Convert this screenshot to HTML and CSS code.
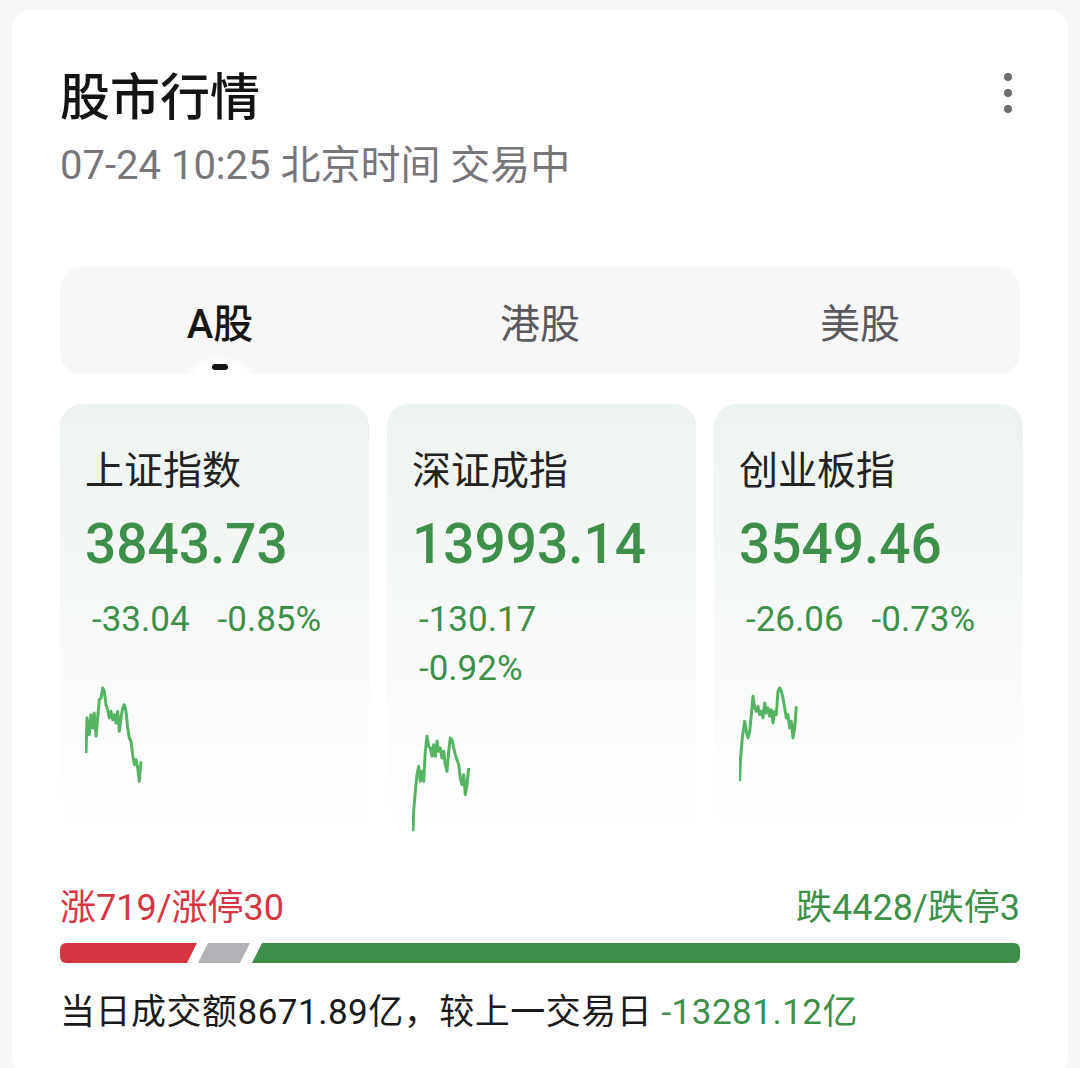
FILE: index.html
```html
<!DOCTYPE html>
<html lang="zh-CN">

<head>
    <meta charset="UTF-8">
    <meta name="viewport" content="width=device-width, initial-scale=1.0">
    <title>股市行情</title>
    <link rel="stylesheet" href="styles.css">
</head>

<body>
    <div class="widget">
        <div class="header">
            <h1>股市行情</h1>
            <button class="more" aria-label="更多">
                <svg width="24" height="40" viewBox="0 0 24 40">
                    <circle cx="12" cy="4" r="4" />
                    <circle cx="12" cy="20" r="4" />
                    <circle cx="12" cy="36" r="4" />
                </svg>
            </button>
        </div>
        <p class="subtitle">07-24 10:25 北京时间 交易中</p>

        <div class="tabs">
            <div class="tab active">A股</div>
            <div class="tab">港股</div>
            <div class="tab">美股</div>
        </div>

        <div class="indexes">
            <div class="index-card">
                <div class="index-name">上证指数</div>
                <div class="index-value">3843.73</div>
                <div class="index-change">
                    <span>-33.04</span>
                    <span>-0.85%</span>
                </div>
                <svg class="spark" width="260" height="100" viewBox="0 0 260 100">
                    <polyline points="1,69 2,34 4.3,50.7 6,30.7 7.7,44 9.3,29 11,52 12.7,34 14.3,15.7 16,14 17.7,4 19.3,7.3 21,20.7 22.7,25.7 24.3,34 26,27.3 27.7,35.7 29.3,30.7 31,39 32.7,27.3 34.3,47.3 36,34 37.7,24 39.3,20.7 41,27.3 42.7,44 44.3,54 46,57.3 47.7,70.7 49.3,80.7 51,75.7 52.7,84 54.3,97.3 56,77.3" />
                </svg>
            </div>
            <div class="index-card">
                <div class="index-name">深证成指</div>
                <div class="index-value">13993.14</div>
                <div class="index-change">
                    <span>-130.17</span>
                    <span>-0.92%</span>
                </div>
                <svg class="spark" width="260" height="100" viewBox="0 0 260 100">
                    <polyline points="1,98.3 1.7,78.3 3.3,58.3 5,41.7 6.7,33.3 8.3,48.3 10,38.3 11.7,48.3 13.3,18.3 15,3.3 16.7,13.3 18.3,15 20,23.3 21.7,11.7 23.3,23.3 25,8.3 26.7,18.3 28.3,15 30,25 31.7,18.3 33.3,31.7 35,38.3 36.7,18.3 38.3,5 40,6.7 41.7,15 43.3,21.7 45,26.7 46.7,31.7 48.3,45 50,51.7 51.7,41.7 53.3,61.7 55,51.7 56.7,35" />
                </svg>
            </div>
            <div class="index-card">
                <div class="index-name">创业板指</div>
                <div class="index-value">3549.46</div>
                <div class="index-change">
                    <span>-26.06</span>
                    <span>-0.73%</span>
                </div>
                <svg class="spark" width="260" height="100" viewBox="0 0 260 100">
                    <polyline points="0.7,97.3 1.3,77.3 3.3,54 5.7,37.3 7.3,47.3 9,54 10.7,47.3 12.3,30.7 14,12.3 15.7,24 17.3,27.3 19,22.3 20.7,30.7 22.3,27.3 24,34 25.7,19 27.3,29 29,24 30.7,32.3 32.3,25.7 34,39 35.7,27.3 37.3,30.7 39,7.3 40.7,4 42.3,7.3 44,14 45.7,24 47.3,34 49,30.7 50.7,44 52.3,37.3 54,54 55.7,44 57.3,22.3" />
                </svg>
            </div>
        </div>

        <div class="breadth">
            <span class="up">涨719/涨停30</span>
            <span class="down">跌4428/跌停3</span>
        </div>
        <div class="breadth-bar">
            <div class="seg seg-up"></div>
            <div class="seg seg-flat"></div>
            <div class="seg seg-down"></div>
        </div>

        <p class="turnover">当日成交额8671.89亿，较上一交易日 <span class="down">-13281.12亿</span></p>
    </div>
</body>

</html>
```

FILE: styles.css
```css
html,
body {
    height: 100%;
    overflow: hidden;
}

body {
    margin: 0;
    padding: 10px 12px 0;
    background-color: #f6f7f9;
    font-family: "Roboto", "Noto Sans CJK SC", sans-serif;
    color: #1a1a1a;
    box-sizing: border-box;
}

.widget {
    background-color: #fff;
    border-radius: 18px;
    padding: 53px 48px 40px;
    min-height: 100%;
    box-sizing: border-box;
}

/* header */
.header {
    display: flex;
    justify-content: space-between;
    align-items: center;
}

h1 {
    margin: 0;
    font-family: "Noto Sans CJK SC", sans-serif;
    font-size: 50px;
    font-weight: 500;
    line-height: 60px;
    color: #141414;
}

.more {
    background: none;
    border: none;
    padding: 0;
    width: 24px;
    height: 40px;
    cursor: pointer;
}

.more svg {
    display: block;
    fill: #6b6b6b;
}

.subtitle {
    margin: 19px 0 0;
    font-size: 40px;
    line-height: 48px;
    color: #76767a;
}

/* tabs */
.tabs {
    display: flex;
    margin-top: 77px;
    height: 107px;
    background-color: #f7f7f7;
    border-radius: 22px;
}

.tab {
    flex: 1;
    position: relative;
    display: flex;
    align-items: center;
    justify-content: center;
    font-size: 40px;
    color: #5a5a5e;
}

.tab.active {
    color: #161616;
    font-weight: 500;
}

.tab.active::before {
    content: "";
    position: absolute;
    bottom: 0;
    left: 50%;
    width: 70px;
    height: 18px;
    margin-left: -35px;
    background: radial-gradient(ellipse 50% 100% at 50% 100%, #fff 70%, rgba(255, 255, 255, 0) 100%);
}

.tab.active::after {
    content: "";
    position: absolute;
    bottom: 4px;
    left: 50%;
    width: 16px;
    height: 6px;
    margin-left: -8px;
    border-radius: 3px;
    background-color: #161616;
}

/* index cards */
.indexes {
    display: grid;
    grid-template-columns: repeat(3, 1fr);
    gap: 18px;
    margin-top: 30px;
}

.index-card {
    padding: 38px 24px 16px 25px;
    border-radius: 22px;
    background: linear-gradient(180deg, #edf3ef 0%, #f7faf8 50%, #ffffff 100%);
}

.index-name {
    font-family: "Noto Sans CJK SC", sans-serif;
    font-size: 39px;
    line-height: 50px;
    color: #222;
}

.index-value {
    margin-top: 20px;
    font-size: 55px;
    font-weight: 500;
    line-height: 64px;
    color: #3d8f4a;
}

.index-change {
    display: flex;
    flex-wrap: wrap;
    column-gap: 28px;
    margin: 19px 0 0 7px;
    max-width: 240px;
    font-size: 35px;
    line-height: 49px;
    color: #3d8f4a;
}

.spark {
    display: block;
    margin-top: 40px;
}

.spark polyline {
    fill: none;
    stroke: #55b462;
    stroke-width: 3;
    stroke-linejoin: round;
}

/* breadth */
.breadth {
    display: flex;
    justify-content: space-between;
    margin-top: 37px;
    font-size: 36px;
    line-height: 44px;
}

.up {
    color: #d63541;
}

.down {
    color: #3d8f4a;
}

.breadth-bar {
    display: flex;
    height: 20px;
    margin-top: 13px;
}

.seg {
    height: 100%;
}

.seg-up {
    width: 137px;
    background-color: #d63541;
    border-radius: 6px 0 0 6px;
    clip-path: polygon(0 0, 100% 0, calc(100% - 10px) 100%, 0 100%);
}

.seg-flat {
    width: 52px;
    margin-left: 1px;
    background-color: #b0b2b6;
    clip-path: polygon(10px 0, 100% 0, calc(100% - 10px) 100%, 0 100%);
}

.seg-down {
    flex: 1;
    margin-left: 2px;
    background-color: #3d8f4a;
    border-radius: 0 6px 6px 0;
    clip-path: polygon(10px 0, 100% 0, 100% 100%, 0 100%);
}

.turnover {
    margin: 28px 0 0;
    font-size: 35px;
    line-height: 44px;
    letter-spacing: 0.5px;
    color: #1a1a1a;
}
```
